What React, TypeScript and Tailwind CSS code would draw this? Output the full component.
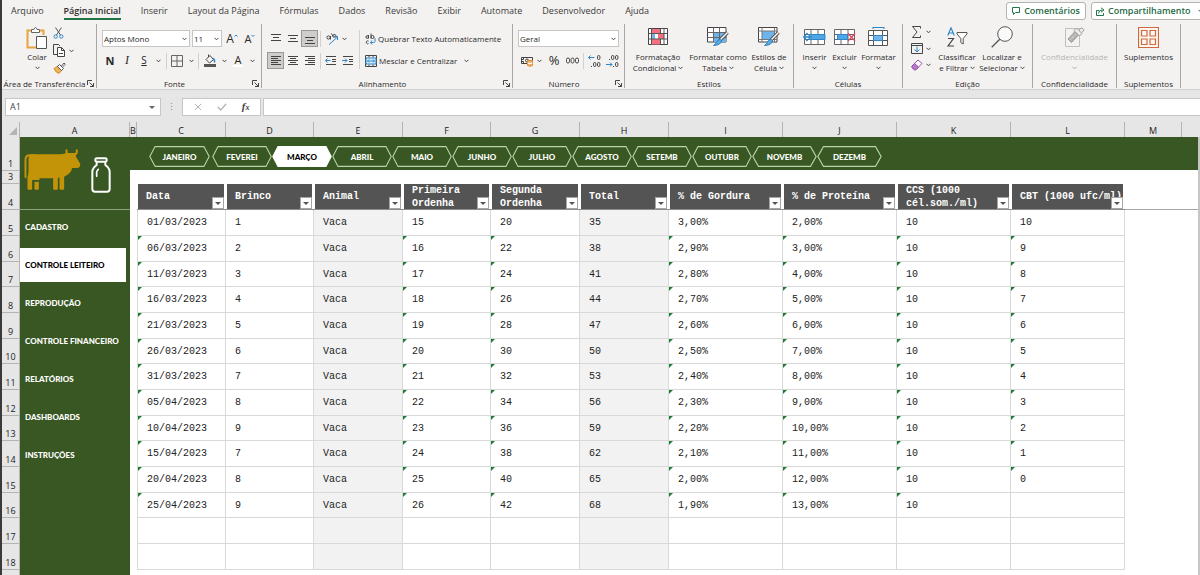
import type { ReactNode } from "react";
import clsx from "clsx";

const tabs = [
  "Arquivo",
  "Página Inicial",
  "Inserir",
  "Layout da Página",
  "Fórmulas",
  "Dados",
  "Revisão",
  "Exibir",
  "Automate",
  "Desenvolvedor",
  "Ajuda",
];

const months = [
  { label: "JANEIRO", width: "w-[61px] mr-[2px]" },
  { label: "FEVEREI", width: "w-[60px]" },
  { label: "MARÇO", width: "w-[60px]" },
  { label: "ABRIL", width: "w-[60px]" },
  { label: "MAIO", width: "w-[60px]" },
  { label: "JUNHO", width: "w-[60px]" },
  { label: "JULHO", width: "w-[60px]" },
  { label: "AGOSTO", width: "w-[60px]" },
  { label: "SETEMB", width: "w-[60px]" },
  { label: "OUTUBR", width: "w-[60px]" },
  { label: "NOVEMB", width: "w-[65px]" },
  { label: "DEZEMB", width: "w-[65px]" },
];

const menu = [
  "CADASTRO",
  "CONTROLE LEITEIRO",
  "REPRODUÇÃO",
  "CONTROLE FINANCEIRO",
  "RELATÓRIOS",
  "DASHBOARDS",
  "INSTRUÇÕES",
];

// "flag" columns carry the green error marker in the corner of the cell
const columns = [
  { letter: "C", title: "Data", width: "w-[89px]", flag: true },
  { letter: "D", title: "Brinco", width: "w-[88px]" },
  { letter: "E", title: "Animal", width: "w-[89px]", shaded: true },
  { letter: "F", title: "Primeira Ordenha", width: "w-[88px]", flag: true },
  { letter: "G", title: "Segunda Ordenha", width: "w-[89px]", flag: true },
  { letter: "H", title: "Total", width: "w-[89px]", shaded: true },
  { letter: "I", title: "% de Gordura", width: "w-[114px]", flag: true },
  { letter: "J", title: "% de Proteína", width: "w-[114px]", flag: true },
  { letter: "K", title: "CCS (1000 cél.som./ml)", width: "w-[114px]", flag: true },
  { letter: "L", title: "CBT (1000 ufc/ml)", width: "w-[114px]", flag: true },
];

const records = [
  ["01/03/2023", "1", "Vaca", "15", "20", "35", "3,00%", "2,00%", "10", "10"],
  ["06/03/2023", "2", "Vaca", "16", "22", "38", "2,90%", "3,00%", "10", "9"],
  ["11/03/2023", "3", "Vaca", "17", "24", "41", "2,80%", "4,00%", "10", "8"],
  ["16/03/2023", "4", "Vaca", "18", "26", "44", "2,70%", "5,00%", "10", "7"],
  ["21/03/2023", "5", "Vaca", "19", "28", "47", "2,60%", "6,00%", "10", "6"],
  ["26/03/2023", "6", "Vaca", "20", "30", "50", "2,50%", "7,00%", "10", "5"],
  ["31/03/2023", "7", "Vaca", "21", "32", "53", "2,40%", "8,00%", "10", "4"],
  ["05/04/2023", "8", "Vaca", "22", "34", "56", "2,30%", "9,00%", "10", "3"],
  ["10/04/2023", "9", "Vaca", "23", "36", "59", "2,20%", "10,00%", "10", "2"],
  ["15/04/2023", "7", "Vaca", "24", "38", "62", "2,10%", "11,00%", "10", "1"],
  ["20/04/2023", "8", "Vaca", "25", "40", "65", "2,00%", "12,00%", "10", "0"],
  ["25/04/2023", "9", "Vaca", "26", "42", "68", "1,90%", "13,00%", "10", ""],
  ["", "", "", "", "", "", "", "", "", ""],
  ["", "", "", "", "", "", "", "", "", ""],
];

const rowHeight = (i: number) => (i % 3 === 2 ? "h-[25px]" : "h-[26px]");

function Svg({ w, h, children, className }: { w: number; h: number; children: ReactNode; className?: string }) {
  return (
    <svg
      width={w}
      height={h}
      viewBox={`0 0 ${w} ${h}`}
      fill="none"
      stroke="#444"
      className={clsx("shrink-0", className)}
      aria-hidden="true"
    >
      {children}
    </svg>
  );
}

function Chevron({ className }: { className?: string }) {
  return (
    <Svg w={5} h={4} className={className}>
      <path d="M.5 .8 2.5 2.8 4.5 .8" />
    </Svg>
  );
}

function Divider() {
  return <span className="h-4 w-px shrink-0 bg-[#d2d0ce]" />;
}

/* ---------- ribbon icons ---------- */

function PasteIcon() {
  return (
    <Svg w={22} h={23}>
      <path d="M5 3.5H1.5v17H10M14 3.5h3.500V8" stroke="#e8a33d" strokeWidth="2" />
      <path d="M5.500 5.500v-3H8q.5-2 1.500-2t1.500 2h2.500v3z" fill="#fff" stroke="#666" />
      <path d="M10.500 9.500h10v12h-10z" fill="#fff" stroke="#555" />
    </Svg>
  );
}

function CutIcon() {
  return (
    <Svg w={11} h={12}>
      <path d="M2.500 .5 7.500 8M8.500 .5 3.500 8" stroke="#555" />
      <circle cx="2.700" cy="9.500" r="1.700" stroke="#2e86c8" />
      <circle cx="8.300" cy="9.500" r="1.700" stroke="#2e86c8" />
    </Svg>
  );
}

function CopyIcon() {
  return (
    <Svg w={13} h={13}>
      <path d="M4 10.500H.5V.5h5l1.500 1.500" />
      <path d="M4.500 3.500h4l3 3v6h-7z" fill="#fff" />
      <path d="M8.500 3.500v3h3M6 9.500h4" />
    </Svg>
  );
}

function BrushIcon() {
  return (
    <Svg w={13} h={12}>
      <path d="M1 6.500 5 4l4 4-3 3.500Q2 10 1 6.500z" fill="#f0b455" stroke="#d18e2a" />
      <path d="m4.500 4.500 4 4 2-2-4-4zM8.500 4l2.500-3 1.300 1.300L9.500 5" fill="#fff" stroke="#555" />
    </Svg>
  );
}

function AlignIcon({ lines, arrow }: { lines: [number, number, number][]; arrow?: "left" | "right" }) {
  return (
    <Svg w={12} h={12}>
      {lines.map(([x1, x2, y]) => (
        <path key={y} d={`M${x1} ${y}.5H${x2}`} />
      ))}
      {arrow === "left" && <path d="M5.500 5.500h-5m2-2-2 2 2 2" stroke="#2e86c8" />}
      {arrow === "right" && <path d="M0 5.500h5m-2-2 2 2-2 2" stroke="#2e86c8" />}
    </Svg>
  );
}

function BordersIcon() {
  return (
    <Svg w={12} h={12}>
      <path d="M.5 .5h11v11H.5zM6 .5v11M.5 6h11" stroke="#666" />
    </Svg>
  );
}

function FillIcon() {
  return (
    <Svg w={12} h={13}>
      <path d="m2 5.500 4-4 3.500 4-4 3.500zM4.500 3V.5" />
      <path d="M9 4.500q2 1 1.500 4" stroke="#2e86c8" strokeWidth="1.500" />
      <path d="M0 11.500h12" stroke="#555" strokeWidth="3" />
    </Svg>
  );
}

function OrientIcon() {
  return (
    <Svg w={13} h={12}>
      <circle cx="2.500" cy="4.500" r="1.600" />
      <path d="M4.500 3v3.500M5.500 .5l2 4M7 3.500a1.500 1.500 0 1 1 1.500 1" />
      <path d="M3 11.500 11.500 4M8 3.500h3.500V7" stroke="#2e86c8" />
    </Svg>
  );
}

function WrapIcon() {
  return (
    <Svg w={11} h={12}>
      <path d="M3.500 2v3.500M3.500 4a1.300 1.300 0 1 0-2.600 0 1.300 1.300 0 0 0 2.600 0M6 .5v5M6 4a1.500 1.500 0 1 0 3 0 1.500 1.500 0 0 0-3 0M3.500 8a1.500 1.500 0 1 0 0 2.600" />
      <path d="M10 5v3.500q0 1-1.500 1H5.500m1.500-2-1.500 2 1.500 2" stroke="#2e86c8" />
    </Svg>
  );
}

function MergeIcon() {
  return (
    <Svg w={12} h={12}>
      <path d="M.5 .5h11v11H.5z" />
      <path d="M4 .5v2M8 .5v2M4 9.500v2M8 9.500v2" />
      <path d="M1 3h10v6H1z" fill="#d8eefb" stroke="#2e86c8" />
      <path d="M2.500 6h7M4 4.500 2.500 6 4 7.500M8 4.500 9.500 6 8 7.500" stroke="#2e86c8" />
    </Svg>
  );
}

function MoneyIcon() {
  return (
    <Svg w={13} h={12}>
      <path d="M.5 2.500h11v6H.5zM.5 4.500h2v-2M4.500 5.500a1.500 1.500 0 1 0 3 0 1.500 1.500 0 0 0-3 0M.5 6.500h2v2" />
      <path d="M6.500 5.500h5v5q-2.500 1.500-5 0z" fill="#f0b46a" stroke="#d98b2b" />
      <path d="M6.500 8q2.500 1.200 5 0" stroke="#fff" />
    </Svg>
  );
}

// zeros are drawn as small ovals, with an arrow for the direction
function DecimalIcon({ more }: { more?: boolean }) {
  const short = more ? 0 : 7;
  const long = more ? 7 : 0;
  return (
    <Svg w={13} h={12}>
      <rect x="9.500" y={short + 0.5} width="2.400" height="4" rx="1.200" />
      <rect x="5.500" y={long + 0.5} width="2.400" height="4" rx="1.200" />
      <rect x="9.500" y={long + 0.5} width="2.400" height="4" rx="1.200" />
      <path d={more ? "M3 11.500h1" : "M3 4.500h1M7 11.500h1"} />
      <path d={more ? "M6.500 2.500h-6m2-2-2 2 2 2" : "M0 9.500h6m-2-2 2 2-2 2"} stroke="#2e86c8" />
    </Svg>
  );
}

function ConditionalIcon() {
  return (
    <Svg w={20} h={18}>
      <path d="M.5 .5h19v16H.5z" fill="#fff" />
      <path d="M3 1h9v4.500H3zM10 5.500h6V11h-6zM3 11h9v5.500H3z" fill="#f4707f" stroke="none" />
      <path d="M3 5.500h4V11H3z" fill="#7cb6e8" stroke="none" />
      <path d="M.5 5.500h19M.5 11h19M3.500 .5v16M12.500 .5v5M16 .5v16M12.500 11v5.500" stroke="#555" />
    </Svg>
  );
}

function PaintBrush() {
  return (
    <>
      <path d="M20.500 5.500 13 13" stroke="#555" strokeWidth="3.500" />
      <path d="M20.500 5.500 13 13" stroke="#fff" strokeWidth="1.500" />
      <path d="M13.500 12.500q1.500 1 .5 3-2 3-7.500 3 2.500-1.500 3-3.500 1.500-3 4-2.500z" fill="#5aaee6" stroke="#2e7ebc" />
    </>
  );
}

function FormatTableIcon() {
  return (
    <Svg w={22} h={20}>
      <path d="M.5 .5h18.500v14.500H.5z" fill="#fff" />
      <path d="M6 5.500h13V15H6z" fill="#6db3ec" stroke="none" />
      <path d="M.5 5.500h18.500M.5 10.500h18.500M6.500 .5V15M12.500 .5V15" stroke="#666" />
      <PaintBrush />
    </Svg>
  );
}

function CellStyleIcon() {
  return (
    <Svg w={22} h={20}>
      <path d="M.5 .5h18.500v14.500H.5z" fill="#fff" />
      <path d="M4 4h12.500v8.500H4z" fill="#6db3ec" stroke="none" />
      <path d="M.5 4h18.500M.5 12.500h18.500M4 .5V15M16.500 .5V15" stroke="#777" />
      <PaintBrush />
    </Svg>
  );
}

function InsertIcon() {
  return (
    <Svg w={23} h={18}>
      <path d="M1.500 1.500h20v15h-20zM1.500 6.500h20M1.500 11.500h20M8 1.500v15M15 1.500v15" fill="#fff" stroke="#666" />
      <path d="M6 6.500h16v5H6z" fill="#4fa6e4" stroke="#2e86c8" />
      <path d="M9 9H1m3.500-4L.7 9l3.800 4" stroke="#2e86c8" strokeWidth="1.500" />
    </Svg>
  );
}

function DeleteIcon() {
  return (
    <Svg w={22} h={18}>
      <path d="M.5 1.500h20v15H.5zM.5 6.500h20M.5 11.500h20M7 1.500v15M14 1.500v15" fill="#fff" stroke="#666" />
      <path d="M3.500 6.500h10v5h-10z" fill="#4fa6e4" stroke="#2e86c8" />
      <path d="m14 5.500 7 7.500m0-7.500L14 13" stroke="#e0475b" strokeWidth="1.300" />
    </Svg>
  );
}

function FormatIcon() {
  return (
    <Svg w={21} h={20}>
      <path d="M5 .5h11M5 0v2M16 0v2" stroke="#2e86c8" />
      <path d="M.5 3.500h19v15H.5zM.5 8.500h19M.5 13.500h19M5.500 3.500v15M14.500 3.500v15" fill="#fff" stroke="#555" />
      <path d="M5.500 8.500h9v5h-9z" fill="#6db3ec" stroke="#2e86c8" />
    </Svg>
  );
}

function SumIcon() {
  return (
    <Svg w={11} h={12}>
      <path d="M9.500 2.500v-2h-8L6 6l-4.500 5.500h8v-2" />
    </Svg>
  );
}

function FillDownIcon() {
  return (
    <Svg w={12} h={11}>
      <path d="M.5 .5h11v10H.5zM.5 2.500h11" />
      <path d="M6 3.500V9M3.500 6.500 6 9l2.500-2.500" stroke="#2e86c8" />
    </Svg>
  );
}

function EraserIcon() {
  return (
    <Svg w={12} h={12}>
      <path d="M1 7 7 1l4 3.500-6 6.200H3.500L1 8.500z" fill="#fff" stroke="#9a4fb0" />
      <path d="m1 7 2.500-2.500L7.500 8 5 10.700H3.500L1 8.500z" fill="#b978cb" stroke="#9a4fb0" />
    </Svg>
  );
}

function SortFilterIcon() {
  return (
    <Svg w={21} h={20}>
      <path d="M.8 8.500 4 .8l3.200 7.700M2 6h4" stroke="#2e86c8" strokeWidth="1.200" />
      <path d="M1 11.500h5.500l-5.500 7.500h6" stroke="#444" strokeWidth="1.200" />
      <path d="M10 5.500h10v1.500l-3.800 4.500v5.500l-2.400-1.500v-4L10 7z" fill="#fff" stroke="#555" />
    </Svg>
  );
}

function FindIcon() {
  return (
    <Svg w={22} h={22}>
      <circle cx="14" cy="8" r="7.300" fill="#fafafa" stroke="#555" />
      <path d="M8.700 13.300.7 21.300" stroke="#555" strokeWidth="1.300" />
    </Svg>
  );
}

function SensitivityIcon() {
  return (
    <Svg w={20} h={21}>
      <path d="M.5 1.500h14v18H.5z" stroke="#c2c0be" />
      <path d="m3 12 7-7.500 3.500 3.500-7 7.500z" fill="#b5b3b1" stroke="#999" />
      <path d="m5.500 12.500 5-5.500" stroke="#eee" strokeDasharray="1 1" />
      <path d="M9 3.500 14.500 9l2.500-2.500-5.500-5.500zM14 2.500 17 .8l2 2-2 2.700" fill="#eee" stroke="#999" />
    </Svg>
  );
}

function AddinsIcon() {
  return (
    <Svg w={21} h={21}>
      <path
        d="M.5 .5h20v20H.5zM3.500 3.500h5.500v5.500H3.500zM12 3.500h5.500v5.500H12zM3.500 12h5.500v5.500H3.500zM12 12h5.500v5.500H12z"
        stroke="#cf6a3c"
        strokeWidth="1.200"
        fill="#fdf6f2"
      />
    </Svg>
  );
}

/* ---------- ribbon building blocks ---------- */

function Group({
  label,
  width,
  launcher,
  children,
}: {
  label: string;
  width: string;
  launcher?: boolean;
  children: ReactNode;
}) {
  return (
    <section className={clsx("flex shrink-0 flex-col justify-between border-r border-[#a8a6a4]", width)}>
      <div className="flex">{children}</div>
      <div className="flex h-[9px] items-center">
        <span className="flex-1 text-center whitespace-nowrap">{label}</span>
        {launcher && (
          <button aria-label={`Opções de ${label}`} className="mr-[2px]">
            <Svg w={7} h={7}>
              <path d="M.5 5V.5H5M2.500 2.500l4 4M6.500 3v3.500H3" />
            </Svg>
          </button>
        )}
      </div>
    </section>
  );
}

function BigButton({
  icon,
  lines,
  width,
  arrowBelow,
  disabled,
}: {
  icon: ReactNode;
  lines: string[];
  width: string;
  arrowBelow?: boolean;
  disabled?: boolean;
}) {
  return (
    <button
      disabled={disabled}
      className={clsx("flex shrink-0 flex-col items-center whitespace-nowrap", width, disabled && "text-[#b5b3b1]")}
    >
      <span className="flex h-6 items-center justify-center">{icon}</span>
      <span className="mt-[2px] leading-[11px]">{lines[0]}</span>
      {lines[1] && (
        <span className="flex items-center gap-[2px] leading-[11px]">
          {lines[1]}
          <Chevron />
        </span>
      )}
      {arrowBelow && <Chevron className={clsx("mt-[4px]", disabled && "opacity-40")} />}
    </button>
  );
}

function Tool({ label, width, active, children }: { label: string; width: string; active?: boolean; children: ReactNode }) {
  return (
    <button
      aria-label={label}
      className={clsx(
        "flex h-[17px] shrink-0 items-center justify-center",
        width,
        active && "border border-[#9a9896] bg-[#cfcdcb]",
      )}
    >
      {children}
    </button>
  );
}

function Dropdown({ label, value, width }: { label: string; value: string; width: string }) {
  return (
    <label className={clsx("relative flex h-[17px] items-center border border-[#c8c6c4] bg-white", width)}>
      <select aria-label={label} defaultValue={value} className="w-full appearance-none bg-transparent px-px outline-none">
        <option>{value}</option>
      </select>
      <Chevron className="pointer-events-none absolute right-[2px]" />
    </label>
  );
}

function Ribbon() {
  return (
    <div className="flex h-[64px] text-[8px] leading-[11px] text-[#2b2a29]">
      <Group label="Área de Transferência" width="w-[95px]" launcher>
        <button className="ml-[23px] flex w-6 flex-col items-center pt-[3px]">
          <PasteIcon />
          <span className="mt-px">Colar</span>
          <Chevron className="mt-[4px]" />
        </button>
        <div className="ml-1 flex flex-col gap-[5px] pt-[3px]">
          <button aria-label="Recortar">
            <CutIcon />
          </button>
          <button aria-label="Copiar" className="flex items-center gap-[3px]">
            <CopyIcon />
            <Chevron />
          </button>
          <button aria-label="Pincel de Formatação">
            <BrushIcon />
          </button>
        </div>
      </Group>

      <Group label="Fonte" width="w-[165px]" launcher>
        <div className="flex flex-col gap-[5px] pt-[6px] pl-[5px]">
          <div className="flex">
            <Dropdown label="Fonte" value="Aptos Mono" width="w-[88px]" />
            <Dropdown label="Tamanho da fonte" value="11" width="w-[30px] ml-[2px]" />
            <Tool label="Aumentar fonte" width="w-[18px] ml-px">
              <span className="text-[12px]">A</span>
              <Svg w={4} h={9}>
                <path d="M.5 2.500 2 1l1.500 1.500" stroke="#2e86c8" />
              </Svg>
            </Tool>
            <Tool label="Diminuir fonte" width="w-[18px]">
              <span className="text-[11px]">A</span>
              <Svg w={4} h={9}>
                <path d="M.5 1 2 2.500 3.500 1" stroke="#2e86c8" />
              </Svg>
            </Tool>
          </div>
          <div className="flex items-center text-[11px]">
            <Tool label="Negrito" width="w-[16px]">
              <b>N</b>
            </Tool>
            <Tool label="Itálico" width="w-[18px]">
              <i className="font-['Liberation_Serif',serif] text-[12px]">I</i>
            </Tool>
            <Tool label="Sublinhado" width="w-[16px]">
              <span className="text-[10px] underline">S</span>
            </Tool>
            <Tool label="Mais sublinhados" width="w-[12px]">
              <Chevron />
            </Tool>
            <span className="w-[2px]" />
            <Divider />
            <Tool label="Bordas" width="w-[20px]">
              <BordersIcon />
            </Tool>
            <Tool label="Mais bordas" width="w-[9px]">
              <Chevron />
            </Tool>
            <span className="w-[2px]" />
            <Divider />
            <Tool label="Cor de preenchimento" width="w-[22px]">
              <FillIcon />
            </Tool>
            <Tool label="Mais cores" width="w-[6px]">
              <Chevron />
            </Tool>
            <Tool label="Cor da fonte" width="w-[22px]">
              <span className="border-b-2 border-white px-[2px] leading-[10px]">A</span>
            </Tool>
            <Tool label="Mais cores de fonte" width="w-[6px]">
              <Chevron />
            </Tool>
          </div>
        </div>
      </Group>

      <Group label="Alinhamento" width="w-[251px]" launcher>
        <div className="flex flex-col gap-[5px] pt-[6px] pl-[5px]">
          <div className="flex items-center">
            <Tool label="Alinhar em cima" width="w-[17px]">
              <AlignIcon lines={[[1, 11, 1], [3, 9, 4], [1, 11, 7]]} />
            </Tool>
            <Tool label="Alinhar no meio" width="w-[17px]">
              <AlignIcon lines={[[1, 11, 2], [3, 9, 5], [1, 11, 8]]} />
            </Tool>
            <Tool label="Alinhar embaixo" width="w-[17px]" active>
              <AlignIcon lines={[[1, 11, 4], [3, 9, 7], [1, 11, 10]]} />
            </Tool>
            <span className="w-[2px]" />
            <Divider />
            <Tool label="Orientação" width="w-[30px]">
              <OrientIcon />
              <Chevron className="ml-[3px]" />
            </Tool>
          </div>
          <div className="flex items-center">
            <Tool label="Alinhar à esquerda" width="w-[17px]" active>
              <AlignIcon lines={[[1, 11, 1], [1, 8, 3], [1, 11, 5], [1, 8, 7], [1, 11, 9]]} />
            </Tool>
            <Tool label="Centralizar" width="w-[17px]">
              <AlignIcon lines={[[1, 11, 1], [3, 9, 3], [1, 11, 5], [3, 9, 7], [1, 11, 9]]} />
            </Tool>
            <Tool label="Alinhar à direita" width="w-[17px]">
              <AlignIcon lines={[[1, 11, 1], [4, 11, 3], [1, 11, 5], [4, 11, 7], [1, 11, 9]]} />
            </Tool>
            <span className="w-[2px]" />
            <Divider />
            <Tool label="Diminuir recuo" width="w-[20px]">
              <AlignIcon arrow="left" lines={[[1, 11, 1], [7, 11, 4], [7, 11, 6], [1, 11, 9]]} />
            </Tool>
            <Tool label="Aumentar recuo" width="w-[14px]">
              <AlignIcon arrow="right" lines={[[1, 11, 1], [7, 11, 4], [7, 11, 6], [1, 11, 9]]} />
            </Tool>
          </div>
        </div>
        <div className="mt-[6px] ml-[4px] flex flex-col gap-[5px] border-l border-[#d2d0ce] pl-[5px]">
          <button className="flex h-[17px] items-center gap-[2px] whitespace-nowrap">
            <WrapIcon />
            Quebrar Texto Automaticamente
          </button>
          <button className="flex h-[17px] items-center gap-[2px] whitespace-nowrap">
            <MergeIcon />
            Mesclar e Centralizar
            <Chevron className="ml-[5px]" />
          </button>
        </div>
      </Group>

      <Group label="Número" width="w-[112px]" launcher>
        <div className="flex flex-col gap-[5px] pt-[6px] pl-[5px]">
          <Dropdown label="Formato de número" value="Geral" width="w-[101px]" />
          <div className="flex items-center">
            <Tool label="Formato de contabilização" width="w-[26px]">
              <MoneyIcon />
              <Chevron className="ml-[3px]" />
            </Tool>
            <Tool label="Porcentagem" width="w-[20px]">
              <span className="text-[13px]">%</span>
            </Tool>
            <Tool label="Separador de milhares" width="w-[16px]">
              <Svg w={13} h={7}>
                <rect x=".5" y="1" width="3" height="5" rx="1.500" />
                <rect x="5" y="1" width="3" height="5" rx="1.500" />
                <rect x="9.500" y="1" width="3" height="5" rx="1.500" />
              </Svg>
            </Tool>
            <span className="w-[3px]" />
            <Divider />
            <Tool label="Aumentar casas decimais" width="w-[20px]">
              <DecimalIcon more />
            </Tool>
            <Tool label="Diminuir casas decimais" width="w-[16px]">
              <DecimalIcon />
            </Tool>
          </div>
        </div>
      </Group>

      <Group label="Estilos" width="w-[169px]">
        <div className="flex pt-[1px] pl-[3px]">
          <BigButton icon={<ConditionalIcon />} lines={["Formatação", "Condicional"]} width="w-[60px]" />
          <BigButton icon={<FormatTableIcon />} lines={["Formatar como", "Tabela"]} width="w-[60px]" />
          <BigButton icon={<CellStyleIcon />} lines={["Estilos de", "Célula"]} width="w-[42px]" />
        </div>
      </Group>

      <Group label="Células" width="w-[109px]">
        <div className="flex pt-[1px] pl-[6px]">
          <BigButton icon={<InsertIcon />} lines={["Inserir"]} width="w-[29px]" arrowBelow />
          <BigButton icon={<DeleteIcon />} lines={["Excluir"]} width="w-[31px]" arrowBelow />
          <BigButton icon={<FormatIcon />} lines={["Formatar"]} width="w-[37px]" arrowBelow />
        </div>
      </Group>

      <Group label="Edição" width="w-[130px]">
        <div className="flex flex-col gap-[5px] pt-[2px] pl-2">
          <button aria-label="AutoSoma" className="flex items-center gap-[4px]">
            <SumIcon />
            <Chevron />
          </button>
          <button aria-label="Preencher" className="flex items-center gap-[3px]">
            <FillDownIcon />
            <Chevron />
          </button>
          <button aria-label="Limpar" className="flex items-center gap-[3px]">
            <EraserIcon />
            <Chevron />
          </button>
        </div>
        <div className="flex pt-[1px] pl-1">
          <BigButton icon={<SortFilterIcon />} lines={["Classificar", "e Filtrar"]} width="w-[44px]" />
          <BigButton icon={<FindIcon />} lines={["Localizar e", "Selecionar"]} width="w-[46px]" />
        </div>
      </Group>

      <Group label="Confidencialidade" width="w-[84px]">
        <div className="flex flex-1 justify-center pt-[1px]">
          <BigButton icon={<SensitivityIcon />} lines={["Confidencialidade"]} width="w-[80px]" arrowBelow disabled />
        </div>
      </Group>

      <Group label="Suplementos" width="w-[64px]">
        <div className="flex flex-1 justify-center pt-[1px]">
          <BigButton icon={<AddinsIcon />} lines={["Suplementos"]} width="w-[60px]" />
        </div>
      </Group>
    </div>
  );
}

function TabBar() {
  return (
    <div className="flex h-6 items-start justify-between">
      <nav className="flex gap-5 pt-[4px] pl-[9px] text-[9px] leading-[14px] whitespace-nowrap text-[#3b3a39]">
        {tabs.map((tab) => (
          <button
            key={tab}
            className={clsx(
              "h-4 border-b-2",
              tab === "Página Inicial" ? "border-[#217346] font-semibold text-[#2f2e2d]" : "border-transparent",
            )}
          >
            {tab}
          </button>
        ))}
      </nav>
      <div className="-mr-[6px] flex shrink-0 gap-[5px] pt-[2px] text-[9px] font-semibold text-[#1e6b43]">
        <button className="flex h-[18px] w-20 items-center justify-center gap-1 rounded-[3px] border border-[#b5b3b1] bg-white">
          <Svg w={8} h={8}>
            <path d="M.5 .5h7v5h-4l-2 2v-2h-1z" stroke="#217346" />
          </Svg>
          Comentários
        </button>
        <button className="flex h-[18px] w-[115px] items-center gap-[3px] rounded-[3px] border border-[#b5b3b1] bg-white pl-[4px]">
          <Svg w={9} h={9}>
            <path d="M3 3.500H.5v5h7V6M2.500 6.500q0-3.500 4-3.500M5 .8 8 3 5 5.200" stroke="#217346" />
          </Svg>
          Compartilhamento
          <Chevron className="ml-1" />
        </button>
      </div>
    </div>
  );
}

function FormulaBar() {
  return (
    <div className="flex h-[18px] items-stretch pl-[3px] text-[9px] text-[#444]">
      <label className="relative flex w-[156px] items-center border border-[#c6c6c6] bg-white">
        <input aria-label="Caixa de nome" defaultValue="A1" className="w-full bg-transparent px-1 outline-none" />
        <span className="absolute right-[5px] border-x-[3px] border-t-[3px] border-x-transparent border-t-[#666]" />
      </label>
      <span className="flex w-[21px] items-center justify-center text-[#888]">⋮</span>
      <div className="flex w-[79px] items-center justify-around border border-[#c6c6c6] bg-white px-[3px]">
        <button aria-label="Cancelar">
          <Svg w={8} h={8}>
            <path d="m.8 .8 6.400 6.400m0-6.400L.8 7.200" stroke="#b5b5b5" />
          </Svg>
        </button>
        <button aria-label="Inserir">
          <Svg w={10} h={8}>
            <path d="m.8 4 3 3L9.200 .8" stroke="#b5b5b5" strokeWidth="1.300" />
          </Svg>
        </button>
        <button aria-label="Inserir função" className="font-['Liberation_Serif',serif] text-[11px] leading-3 font-bold italic">
          f<span className="text-[8px]">x</span>
        </button>
      </div>
      <input
        aria-label="Barra de fórmulas"
        className="ml-[2px] min-w-0 flex-1 border border-r-0 border-[#c6c6c6] bg-white px-1 outline-none"
      />
    </div>
  );
}

/* ---------- worksheet ---------- */

function CowIcon() {
  return (
    <svg width="57" height="41" viewBox="0 0 170 123" fill="#c49408" aria-hidden="true">
      <path
        d="M4 84V32q0-13 14-13h12"
        fill="none"
        stroke="#c49408"
        strokeWidth="6"
        strokeLinecap="round"
      />
      <path d="M26 16H106q10 0 20-4h26l4 12 12 20q2 12-10 13h-14q-4 18-24 26v36q0 3-3 3h-8q-3 0-3-3V86h-5v33q0 3-3 3h-8q-3 0-3-3V88H46v5H24v26q0 3-3 3h-8q-3 0-3-3V84q3-8 3-18V30q0-14 13-14z" />
      <path d="M31 98h13v21q0 3-3 3h-7q-3 0-3-3z" />
      <path
        d="M127 4v4q0 8 8 8h15q8 0 8-8V4"
        fill="none"
        stroke="#c49408"
        strokeWidth="6"
        strokeLinecap="round"
      />
    </svg>
  );
}

function BottleIcon() {
  return (
    <svg width="20" height="36" viewBox="0 0 60 108" fill="none" stroke="#fff" strokeWidth="6" strokeLinejoin="round" strokeLinecap="round" aria-hidden="true">
      <path d="M17 4h26q4 0 4 5t-4 5H17q-4 0-4-5t4-5zM17 14v10Q4 34 4 44v52q0 8 8 8h36q8 0 8-8V44q0-10-13-20V14" />
      <path d="M17 58V46q0-5 5-9" strokeWidth="5" />
    </svg>
  );
}

function MonthTab({ label, width }: { label: string; width: string }) {
  const active = label === "MARÇO";
  return (
    <button
      className={clsx(
        "relative flex h-[21px] shrink-0 items-center justify-center text-[8px] font-black",
        width,
        active ? "text-black" : "text-white",
      )}
    >
      <svg viewBox="0 0 60 21" preserveAspectRatio="none" className="absolute inset-0 h-full w-full" aria-hidden="true">
        <path
          d="M.8 10.500 6 .6h48l5.200 9.900L54 20.400H6z"
          fill={active ? "#fff" : "none"}
          stroke={active ? "#fff" : "#b9d3a8"}
          strokeWidth="1.100"
        />
      </svg>
      <span className="relative">{label}</span>
    </button>
  );
}

function FilterButton({ title }: { title: string }) {
  return (
    <button
      aria-label={`Filtrar ${title}`}
      className="absolute right-0 bottom-0 flex h-3 w-3 items-center justify-center border border-[#a6a6a6] bg-white"
    >
      <span className="border-x-[3px] border-t-[3px] border-x-transparent border-t-[#555]" />
    </button>
  );
}

function ColumnHeader() {
  const cell = "flex shrink-0 items-end justify-center border-r border-[#b4b4b4]";
  return (
    <div className="flex h-[15px] text-[9px] leading-[13px] text-[#222]">
      <div className="flex w-[18px] shrink-0 items-end justify-end border-r border-[#b4b4b4] p-[2px]">
        <Svg w={8} h={8}>
          <path d="M8 0v8H0z" fill="#b4b4b4" stroke="none" />
        </Svg>
      </div>
      <div className={clsx(cell, "w-[110px]")}>A</div>
      <div className={clsx(cell, "w-[7px]")}>B</div>
      {columns.map((col) => (
        <div key={col.letter} className={clsx(cell, col.width)}>
          {col.letter}
        </div>
      ))}
      <div className={clsx(cell, "w-[57px]")}>M</div>
    </div>
  );
}

function RowHeader() {
  const cell = "flex items-end justify-center border-b border-[#b4b4b4]";
  return (
    <div className="w-[18px] shrink-0 border-r border-[#b4b4b4] bg-[#e6e6e6] text-[9px] leading-[12px] text-[#222]">
      <div className={clsx(cell, "h-[34px]")}>1</div>
      <div className={clsx(cell, "h-[13px]")}>3</div>
      <div className={clsx(cell, "h-[26px] border-[#8c8c8c]")}>4</div>
      {records.map((_, i) => (
        <div key={i} className={clsx(cell, rowHeight(i))}>
          {i + 5}
        </div>
      ))}
    </div>
  );
}

function Sidebar() {
  return (
    <aside className="w-[110px] shrink-0 bg-[#385723]">
      <div className="flex h-[73px] items-start border-b border-[#8fa383] pt-3 pl-1">
        <CowIcon />
        <div className="pt-2 pl-[10px]">
          <BottleIcon />
        </div>
      </div>
      <nav className="flex flex-col gap-1 font-['Lato','Open_Sans',sans-serif] text-[8px] font-black">
        {menu.map((item) => (
          <a
            key={item}
            href="#"
            className={clsx(
              "mr-1 flex h-[34px] items-center pl-[5px] whitespace-nowrap",
              item === "CONTROLE LEITEIRO" ? "bg-white text-black" : "text-white",
            )}
          >
            {item}
          </a>
        ))}
      </nav>
    </aside>
  );
}

function MilkTable() {
  return (
    <table className="w-full table-fixed border-separate border-spacing-0 font-['Liberation_Mono','DejaVu_Sans_Mono',monospace] text-[10px] leading-[13px]">
      <colgroup>
        {columns.map((col) => (
          <col key={col.letter} className={col.width} />
        ))}
        <col />
      </colgroup>
      <thead>
        <tr className="h-[26px]">
          {columns.map((col) => (
            <th key={col.letter} scope="col" className="border-b border-[#8c8c8c] p-0 text-left font-bold text-white">
              <div className="relative mr-[2px] ml-px flex h-[25px] items-center overflow-hidden bg-[#545454] pl-2">
                <span className={clsx(col.letter === "L" && "whitespace-nowrap")}>{col.title}</span>
                <FilterButton title={col.title} />
              </div>
            </th>
          ))}
          <td className="border-b border-[#a6a6a6] p-0" />
        </tr>
      </thead>
      <tbody className="text-[#222]">
        {records.map((record, i) => (
          <tr key={i} className={rowHeight(i)}>
            {record.map((value, c) => (
              <td
                key={c}
                className={clsx(
                  "relative border-r border-b border-[#d9d9d9] p-0 pl-[9px]",
                  c === 0 && "border-l",
                  columns[c].shaded && "bg-[#f2f2f2]",
                )}
              >
                {value}
                {columns[c].flag && i > 0 && value && (
                  <span className="absolute top-0 left-0 border-t-4 border-r-4 border-t-[#1e7b34] border-r-transparent" />
                )}
              </td>
            ))}
            <td className="p-0" />
          </tr>
        ))}
      </tbody>
    </table>
  );
}

export default function App() {
  return (
    <div className="flex h-screen flex-col overflow-hidden border-l-2 border-[#3a3a3a] bg-[#e6e6e6] font-['Open_Sans','Noto_Sans',sans-serif]">
      <header className="h-[90px] shrink-0 overflow-hidden border-b border-[#d2d0ce] bg-[#f3f2f1]">
        <TabBar />
        <Ribbon />
      </header>

      <div className="pt-2">
        <FormulaBar />
      </div>

      <div className="flex min-h-0 flex-1 flex-col pt-[6px]">
        <ColumnHeader />
        <main className="flex flex-1 border-r-2 border-[#c6c6c6] bg-white">
          <RowHeader />
          <Sidebar />
          <div className="min-w-0 flex-1">
            <nav className="flex h-[33px] bg-[#385723] pt-[9px] pl-[19px] font-['Lato','Open_Sans',sans-serif]">
              {months.map((month) => (
                <MonthTab key={month.label} {...month} />
              ))}
            </nav>
            <div className="pt-[14px] pl-[7px]">
              <MilkTable />
            </div>
          </div>
        </main>
      </div>
    </div>
  );
}
